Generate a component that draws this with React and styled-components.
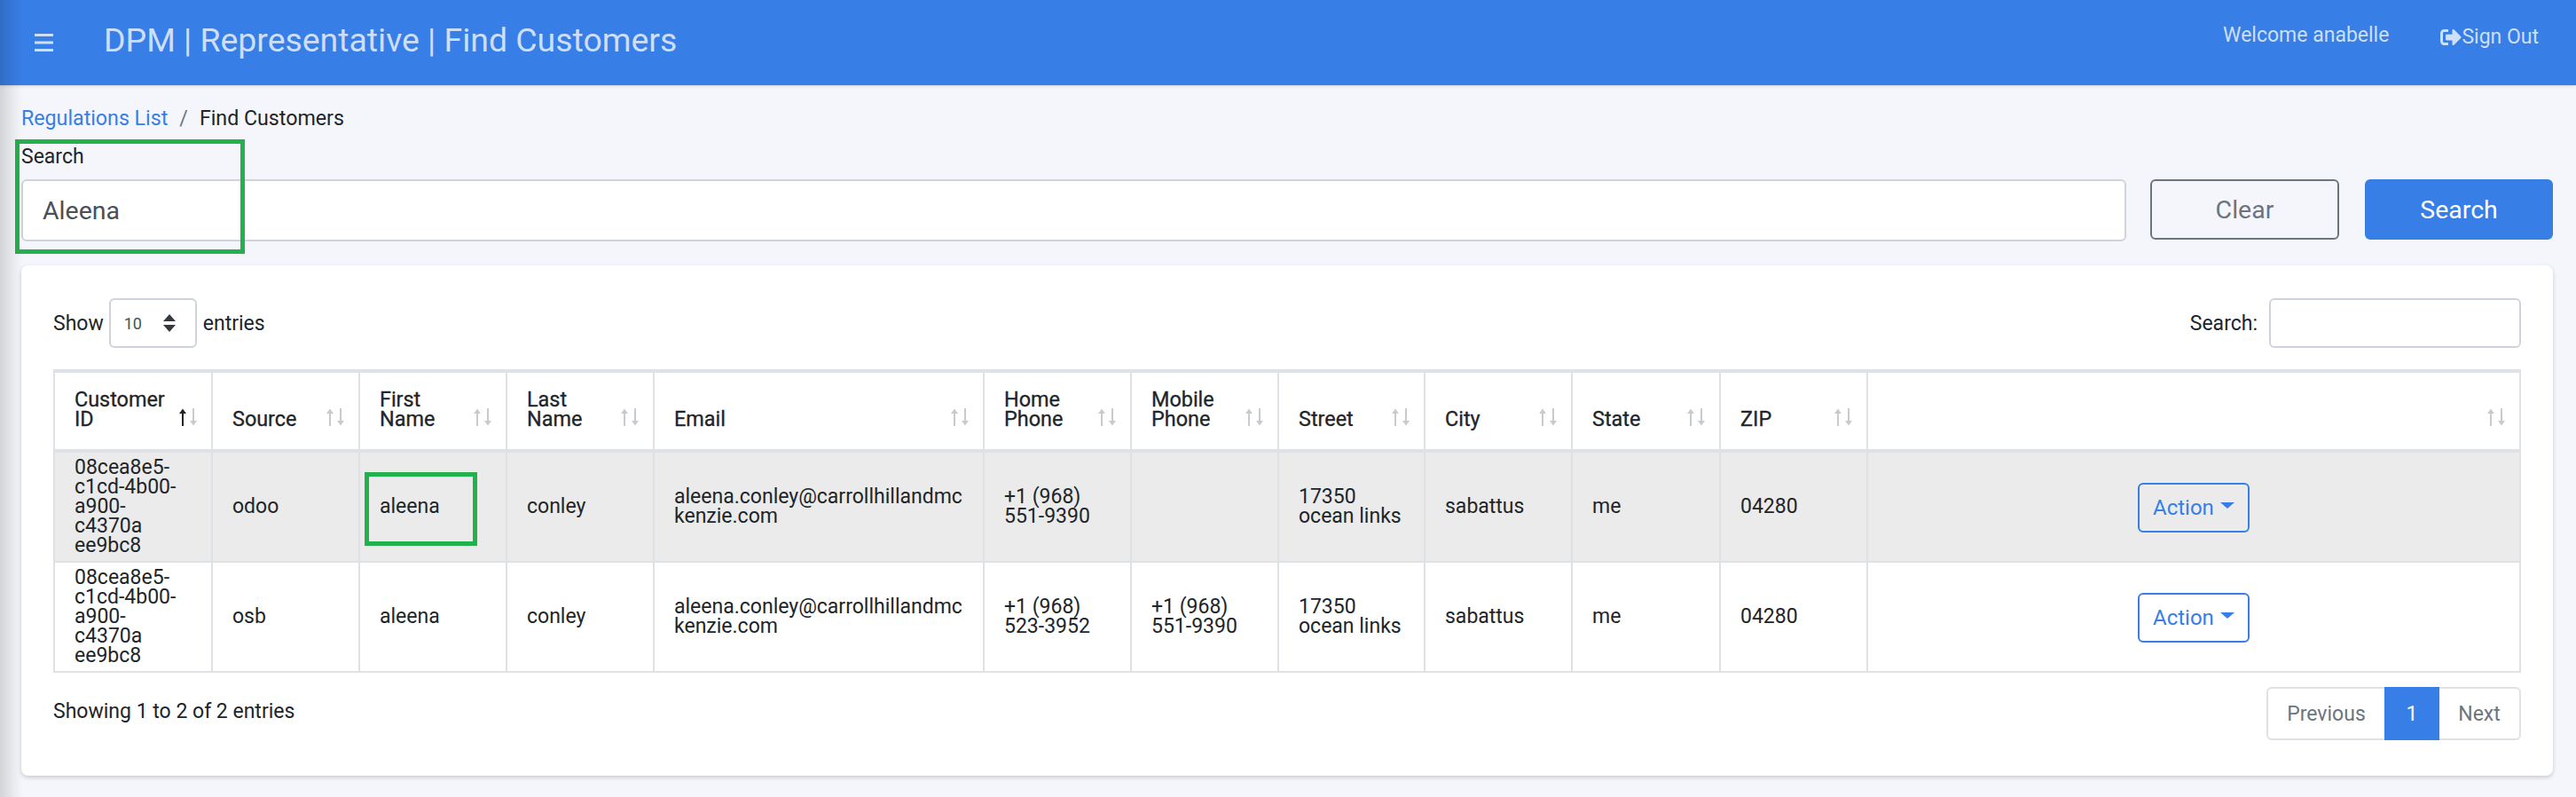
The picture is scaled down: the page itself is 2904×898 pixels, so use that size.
import React from 'react';
import styled, { createGlobalStyle } from 'styled-components';
import { FaSignOutAlt } from 'react-icons/fa';

const Global = createGlobalStyle`
  html, body { margin: 0; padding: 0; background: #f4f6fb; }
  body { font-family: Roboto, "Liberation Sans", sans-serif; color: #212529; }
  * { box-sizing: border-box; }
`;

const Page = styled.div`
  position: relative;
  width: 2904px;
  height: 898px;
  overflow: hidden;
  background: #f4f6fb;
`;
const EdgeShade = styled.div`
  position: absolute;
  left: 0; top: 0; bottom: 0;
  width: 26px;
  background: linear-gradient(to right, rgba(0,0,0,.14), rgba(0,0,0,.03) 70%, rgba(0,0,0,0));
  pointer-events: none;
  z-index: 5;
`;
const Header = styled.header`
  height: 96px;
  background: #377ee6;
  color: rgba(255,255,255,.76);
  display: flex;
  align-items: flex-start;
  padding: 0 42px 0 39px;
  box-shadow: 0 1px 3px rgba(0,0,0,.15);
`;
const Burger = styled.svg`
  width: 21px;
  height: 20px;
  margin-top: 38px;
  flex: none;
`;
const Title = styled.h1`
  margin: 21px 0 0 57px;
  font-size: 37.4px;
  line-height: 48px;
  font-weight: 400;
  flex: 1;
`;
const Welcome = styled.div`
  font-size: 23px;
  line-height: 28px;
  margin-top: 26px;
`;
const SignOut = styled.div`
  display: flex;
  align-items: center;
  font-size: 23px;
  line-height: 28px;
  margin: 28px 0 0 58px;
  svg { width: 24px; height: 24px; }
`;
const Main = styled.main`
  padding: 0 26px 0 24px;
`;
const Crumbs = styled.nav`
  display: flex;
  font-size: 23.2px;
  line-height: 28px;
  padding-top: 23px;
  height: 67px;
`;
const CrumbLink = styled.a`
  color: #377ee6;
`;
const CrumbSep = styled.span`
  color: #6c757d;
  margin: 0 13px;
`;
const SearchBar = styled.section`
  display: flex;
  align-items: flex-start;
  height: 136px;
`;
const SearchField = styled.div`
  position: relative;
  flex: 1;
`;
const FieldLabel = styled.label`
  display: block;
  font-size: 23px;
  line-height: 28px;
  height: 39px;
`;
const BigInput = styled.input`
  display: block;
  width: 100%;
  height: 70px;
  padding: 0 22px;
  font: 400 28.5px Roboto, sans-serif;
  color: #495057;
  background: #fff;
  border: 2px solid #ced4da;
  border-radius: 6px;
  outline: none;
`;
const Highlight = styled.div`
  position: absolute;
  border: 5px solid #23b14d;
  pointer-events: none;
`;
const SearchHighlight = styled(Highlight)`
  left: -7px; top: -6px;
  width: 259px; height: 129px;
`;
const CellHighlight = styled(Highlight)`
  left: 5px; top: 22px;
  width: 127px; height: 83px;
`;
const BigButton = styled.button`
  width: ${p => p.$w}px;
  height: 68px;
  margin-top: 39px;
  margin-left: ${p => p.$gap}px;
  font: 400 28.5px Roboto, sans-serif;
  border-radius: 6px;
  border: 2px solid ${p => (p.$primary ? '#377ee6' : '#6c757d')};
  color: ${p => (p.$primary ? '#fff' : '#6c757d')};
  background: ${p => (p.$primary ? '#377ee6' : 'transparent')};
`;
const Card = styled.section`
  background: #fff;
  border-radius: 8px;
  box-shadow: 0 2px 5px rgba(0,0,0,.18);
  height: 575px;
  padding: 37px 36px 40px;
`;
const TopRow = styled.div`
  display: flex;
  justify-content: space-between;
  align-items: center;
  height: 56px;
  margin-bottom: 24px;
  font-size: 23px;
`;
const Length = styled.div`
  display: flex;
  align-items: center;
`;
const LengthSelect = styled.div`
  width: 99px;
  height: 56px;
  margin: 0 7px 0 6px;
  border: 2px solid #ced4da;
  border-radius: 6px;
  display: flex;
  align-items: center;
  justify-content: space-between;
  padding: 0 22px 0 15px;
  font-size: 18px;
  color: #495057;
`;
const Filter = styled.div`
  display: flex;
  align-items: center;
  gap: 13px;
`;
const FilterInput = styled.input`
  width: 284px;
  height: 56px;
  border: 2px solid #ced4da;
  border-radius: 6px;
  background: #fff;
  outline: none;
`;
const Table = styled.table`
  table-layout: fixed;
  width: 2782px;
  border-collapse: separate;
  border-spacing: 0;
  border-left: 2px solid #dee2e6;
  border-top: 4px solid #dee2e6;
  font-size: 23px;
  line-height: 22px;
`;
const Th = styled.th`
  position: relative;
  height: 90px;
  padding: 0 40px 23px 22px;
  text-align: left;
  vertical-align: bottom;
  font-weight: 400;
  font-size: 23.4px;
  white-space: pre-line;
  -webkit-text-stroke: 0.3px #212529;
  border-right: 2px solid #dee2e6;
  border-bottom: 4px solid #dee2e6;
`;
const SortIcon = styled.svg`
  position: absolute;
  right: 15px;
  bottom: 26px;
  width: 22px;
  height: 20px;
`;
const Row = styled.tr`
  background: ${p => (p.$shaded ? '#ebebeb' : '#fff')};
`;
const Td = styled.td`
  position: relative;
  height: 124px;
  padding: 0 ${p => (p.$center ? 22 : 12)}px 0 22px;
  vertical-align: middle;
  white-space: pre-line;
  text-align: ${p => (p.$center ? 'center' : 'left')};
  border-right: 2px solid #dee2e6;
  border-bottom: 2px solid #dee2e6;
`;
const ActionButton = styled.button`
  display: inline-flex;
  align-items: center;
  gap: 7px;
  width: 126px;
  height: 56px;
  margin-top: 2px;
  padding: 0 0 0 15px;
  font: 400 24px Roboto, sans-serif;
  color: #377ee6;
  background: transparent;
  border: 2px solid #377ee6;
  border-radius: 6px;
`;
const Caret = styled.span`
  width: 0;
  height: 0;
  margin-bottom: 6px;
  border-left: 8px solid transparent;
  border-right: 8px solid transparent;
  border-top: 7px solid #377ee6;
`;
const Footer = styled.div`
  display: flex;
  justify-content: space-between;
  align-items: center;
  margin-top: 16px;
  font-size: 23px;
`;
const Info = styled.span`
  margin-bottom: 6px;
`;
const Pager = styled.div`
  display: flex;
  height: 60px;
`;
const PageItem = styled.div`
  display: flex;
  align-items: center;
  justify-content: center;
  width: ${p => p.$w}px;
  color: ${p => (p.$active ? '#fff' : '#6c757d')};
  background: ${p => (p.$active ? '#377ee6' : '#fff')};
  border: 2px solid ${p => (p.$active ? '#377ee6' : '#dee2e6')};
  border-left-width: ${p => (p.$first || p.$active ? 2 : 0)}px;
  border-right-width: ${p => (p.$last || p.$active ? 2 : 0)}px;
  border-radius: ${p => (p.$first ? '6px 0 0 6px' : p.$last ? '0 6px 6px 0' : '0')};
`;

const Sort = ({ active }) => (
  <SortIcon viewBox="0 0 22 20">
    <path fill={active ? '#212529' : '#c8cbce'} d="M4 20V6H1L5 0.5 9 6H6V20Z" />
    <path fill="#c8cbce" d="M16 0V14H13L17 19.5 21 14H18V0Z" />
  </SortIcon>
);

const columns = [
  ['Customer\nID', 178], ['Source', 166], ['First\nName', 166], ['Last\nName', 166],
  ['Email', 372], ['Home\nPhone', 166], ['Mobile\nPhone', 166], ['Street', 165],
  ['City', 166], ['State', 167], ['ZIP', 166], ['', 736],
];

const rows = [
  { source: 'odoo', home: '+1 (968)\n551-9390', mobile: '', shaded: true },
  { source: 'osb', home: '+1 (968)\n523-3952', mobile: '+1 (968)\n551-9390' },
];

export default function App() {
  return (
    <Page>
      <Global />
      <EdgeShade />
      <Header>
        <Burger viewBox="0 0 21 20">
          <path d="M0 1.5H21M0 10H21M0 18.5H21" stroke="currentColor" strokeWidth="3" />
        </Burger>
        <Title>DPM | Representative | Find Customers</Title>
        <Welcome>Welcome anabelle</Welcome>
        <SignOut><FaSignOutAlt style={{ transform: 'scaleX(-1) rotate(180deg)' }} />Sign Out</SignOut>
      </Header>
      <Main>
        <Crumbs>
          <CrumbLink>Regulations List</CrumbLink>
          <CrumbSep>/</CrumbSep>
          <span>Find Customers</span>
        </Crumbs>
        <SearchBar>
          <SearchField>
            <FieldLabel>Search</FieldLabel>
            <BigInput readOnly value="Aleena" />
            <SearchHighlight />
          </SearchField>
          <BigButton $w={213} $gap={27}>Clear</BigButton>
          <BigButton $w={212} $gap={29} $primary>Search</BigButton>
        </SearchBar>
        <Card>
          <TopRow>
            <Length>
              Show
              <LengthSelect>
                10
                <svg width="14" height="20" viewBox="0 0 14 20">
                  <path d="M7 0L14 8H0ZM7 20L0 12H14Z" fill="#343a40" />
                </svg>
              </LengthSelect>
              entries
            </Length>
            <Filter>
              Search:
              <FilterInput readOnly />
            </Filter>
          </TopRow>
          <Table>
            <colgroup>
              {columns.map(([, w], i) => <col key={i} style={{ width: w }} />)}
            </colgroup>
            <thead>
              <tr>
                {columns.map(([label], i) => (
                  <Th key={i}>
                    {label}
                    <Sort active={i === 0} />
                  </Th>
                ))}
              </tr>
            </thead>
            <tbody>
              {rows.map((r, i) => (
                <Row key={i} $shaded={r.shaded}>
                  <Td>{'08cea8e5-\nc1cd-4b00-\na900-\nc4370a\nee9bc8'}</Td>
                  <Td>{r.source}</Td>
                  <Td>aleena{i === 0 && <CellHighlight />}</Td>
                  <Td>conley</Td>
                  <Td>{'aleena.conley@carrollhillandmc\nkenzie.com'}</Td>
                  <Td>{r.home}</Td>
                  <Td>{r.mobile}</Td>
                  <Td>{'17350\nocean links'}</Td>
                  <Td>sabattus</Td>
                  <Td>me</Td>
                  <Td>04280</Td>
                  <Td $center><ActionButton>Action<Caret /></ActionButton></Td>
                </Row>
              ))}
            </tbody>
          </Table>
          <Footer>
            <Info>Showing 1 to 2 of 2 entries</Info>
            <Pager>
              <PageItem $w={133} $first>Previous</PageItem>
              <PageItem $w={62} $active>1</PageItem>
              <PageItem $w={92} $last>Next</PageItem>
            </Pager>
          </Footer>
        </Card>
      </Main>
    </Page>
  );
}
